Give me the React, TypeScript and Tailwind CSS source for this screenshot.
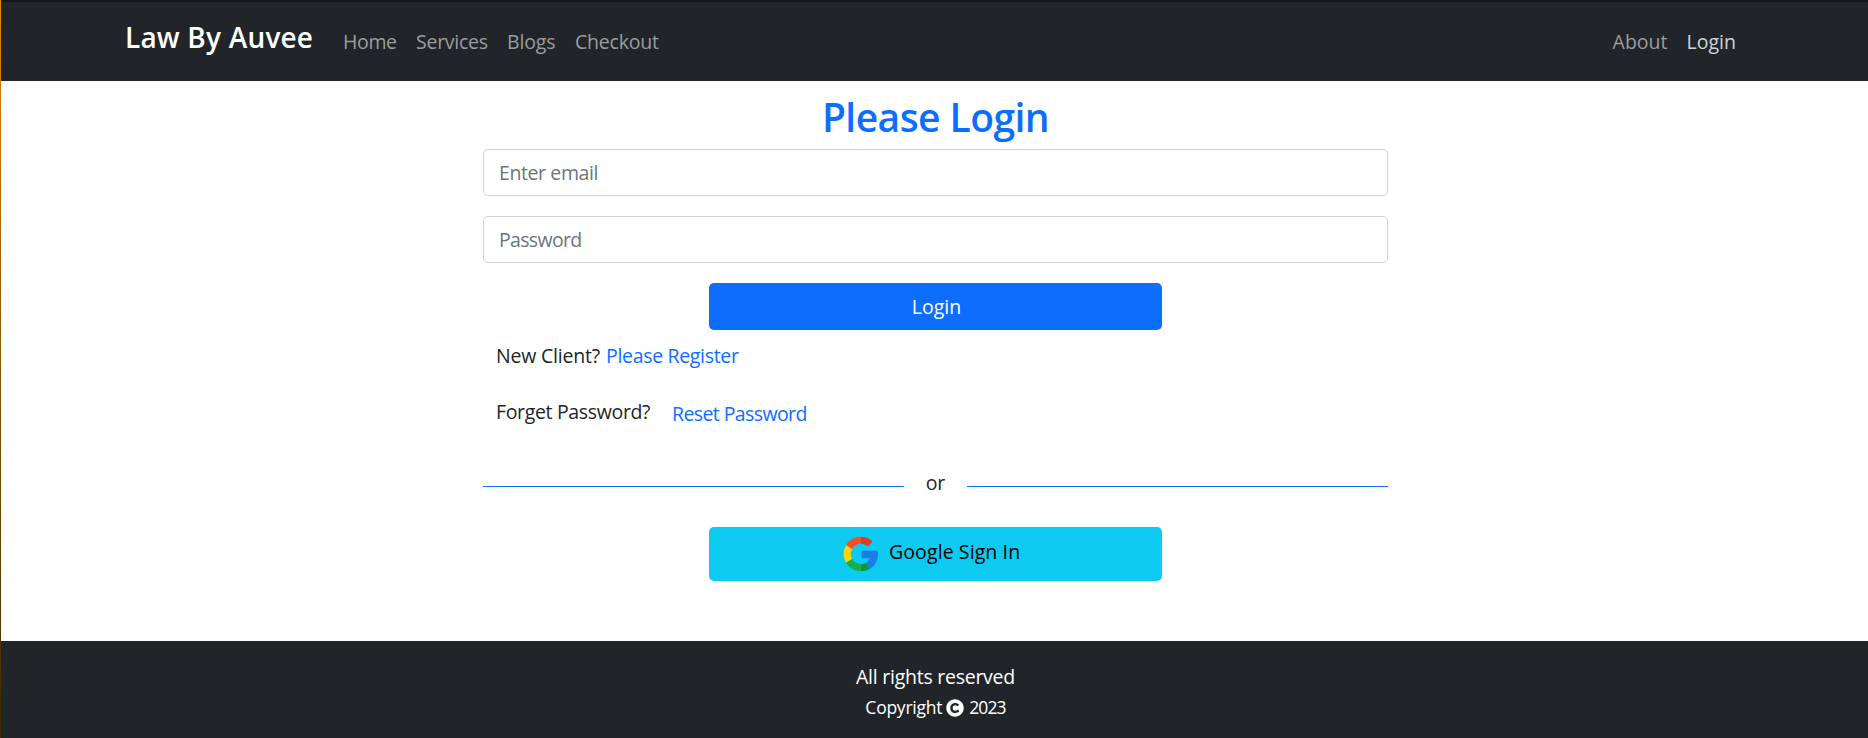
import { FaCopyright } from "react-icons/fa";

function GoogleLogo() {
  return (
    <svg className="h-[36px] w-[36px] shrink-0" viewBox="-18 -18 36 36" aria-hidden="true">
      <path fill="#ff4b26" d="M0-17.3A17.3 17.3 0 0 0-14.9-8.8L-8.8-5.1A10.2 10.2 0 0 1 0-10.2Z" />
      <path fill="#d93f21" d="M0-17.3A17.3 17.3 0 0 1 10.6-13.7Q11.9-12.7 10.8-11.5L7.9-8.5Q7-7.6 5.9-8.4A10.2 10.2 0 0 0 0-10.2Z" />
      <path fill="#ffd500" d="M-14.9-8.8A17.3 17.3 0 0 0-14.9 8.8L-8.8 5.1A10.2 10.2 0 0 1-8.8-5.1Z" />
      <path fill="#14b04a" d="M-14.9 8.8A17.3 17.3 0 0 0 0 17.3V10.2A10.2 10.2 0 0 1-8.8 5.1Z" />
      <path fill="#0f9643" d="M0 17.3A17.3 17.3 0 0 0 8.8 14.9L5.1 8.8A10.2 10.2 0 0 1 0 10.2Z" />
      <path fill="#1a7de8" d="M1.7-3.2H15.9Q16.9-3.2 16.9-2A17.3 17.3 0 0 1 8.8 14.9L5.1 8.8A10.2 10.2 0 0 0 8.9 4.2H1.7Q.7 4.2 .7 3.2V-2.2Q.7-3.2 1.7-3.2Z" />
    </svg>
  );
}

export default function App() {
  return (
    <div className="flex h-[738px] overflow-hidden bg-white font-['Open_Sans','Noto_Sans',sans-serif] text-[19.5px] leading-[30px] text-[#212529]">
      <div className="w-px shrink-0 bg-linear-to-b from-[#e08a00] to-[#402800]" />
      <div className="flex min-w-0 flex-1 flex-col">
        <header className="flex h-[81px] shrink-0 items-start border-t-2 border-[#161719] bg-[#212529] pl-[124px] pr-[132px] text-[#9b9d9e]">
          <a className="mt-[14px] w-[218px] text-[28px] font-semibold leading-[42px] tracking-[0.2px] text-white">Law By Auvee</a>
          <nav className="mt-[25px] flex flex-1">
            <a className="w-[73px] tracking-[-0.35px]">Home</a>
            <a className="w-[91px] tracking-[-0.25px]">Services</a>
            <a className="w-[68px] tracking-[-0.17px]">Blogs</a>
            <a className="tracking-[-0.2px]">Checkout</a>
          </nav>
          <nav className="mt-[25px] flex">
            <a className="w-[74px]">About</a>
            <a className="text-[#d3d3d4]">Login</a>
          </nav>
        </header>

        <main className="mx-auto flex h-[560px] w-[907px] shrink-0 flex-col pl-[2px] pt-[12px]">
          <h2 className="text-center text-[39px] font-semibold leading-[48px] tracking-[-0.55px] text-[#0d6efd]">Please Login</h2>
          <form className="mt-[8px] flex flex-col gap-[20px]">
            <input
              type="email"
              placeholder="Enter email"
              className="h-[47px] rounded-[5px] border border-[#ced4da] px-[15px] tracking-[-0.4px] outline-none placeholder:text-[#6c757d]"
            />
            <input
              type="password"
              placeholder="Password"
              className="h-[47px] rounded-[5px] border border-[#ced4da] px-[15px] tracking-[-0.67px] outline-none placeholder:text-[#6c757d]"
            />
            <button type="button" className="h-[47px] w-[453px] self-center rounded-[5px] bg-[#0d6efd] pl-[2px] text-white">
              Login
            </button>
          </form>
          <p className="mt-[11px] flex pl-[13px]">
            <span className="w-[110px] tracking-[-0.2px]">New Client?</span>
            <a className="tracking-[-0.32px] text-[#0d6efd]">Please Register</a>
          </p>
          <p className="mt-[26px] flex pl-[13px]">
            <span className="w-[176px] tracking-[-0.34px]">Forget Password?</span>
            <a className="mt-[2px] tracking-[-0.6px] text-[#0d6efd]">Reset Password</a>
          </p>
          <div className="mt-[39px] flex">
            <div className="mt-[18px] h-px flex-1 bg-[#0d6efd]" />
            <span className="w-[63px] text-center tracking-[-0.2px]">or</span>
            <div className="mt-[18px] h-px flex-1 bg-[#0d6efd]" />
          </div>
          <button
            type="button"
            className="mt-[29px] flex h-[54px] w-[453px] items-start self-center rounded-[5px] bg-[#0dcaf0] pl-[134px] pt-[9px] text-black"
          >
            <GoogleLogo />
            <span className="ml-[10px] mt-px tracking-[0.1px]">Google Sign In</span>
          </button>
        </main>

        <footer className="flex flex-1 flex-col items-center bg-[#212529] pl-[2px] pt-[21px] text-white">
          <p className="tracking-[-0.25px]">All rights reserved</p>
          <p className="mt-[2px] flex text-[17.5px] leading-[27px]">
            <span className="tracking-[-0.25px]">Copyright</span>
            <FaCopyright className="ml-[4px] mr-[5px] mt-[5px] h-[18px] w-[18px]" />
            <span className="tracking-[-0.9px]">2023</span>
          </p>
        </footer>
      </div>
    </div>
  );
}
